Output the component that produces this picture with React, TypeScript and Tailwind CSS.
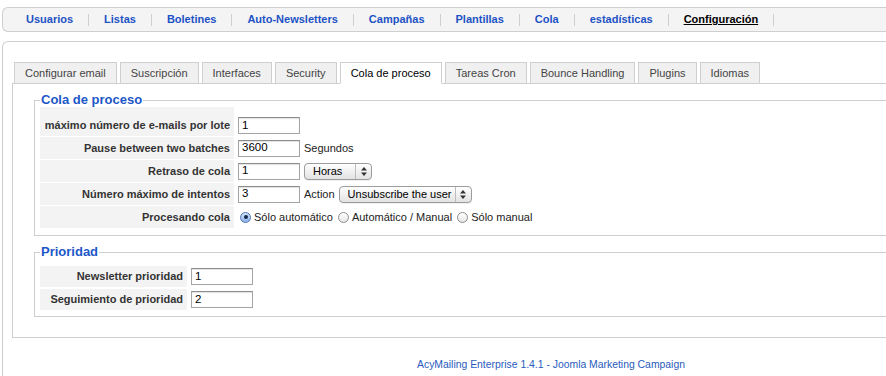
import React from "react";

const menu = [
  "Usuarios",
  "Listas",
  "Boletines",
  "Auto-Newsletters",
  "Campañas",
  "Plantillas",
  "Cola",
  "estadísticas",
  "Configuración",
];

const tabs = [
  "Configurar email",
  "Suscripción",
  "Interfaces",
  "Security",
  "Cola de proceso",
  "Tareas Cron",
  "Bounce Handling",
  "Plugins",
  "Idiomas",
];

function Arrows() {
  return (
    <svg width="6" height="9" viewBox="0 0 6 9">
      <path d="M3 0 L6 3.5 L0 3.5 Z" fill="#333" />
      <path d="M3 9 L6 5.5 L0 5.5 Z" fill="#333" />
    </svg>
  );
}

function Select({ label, w }: { label: string; w: string }) {
  return (
    <div
      className={`h-[17px] rounded-[4px] border border-[#9c9c9c] bg-linear-to-b from-white to-[#e2e2e2] flex items-stretch text-[11px] text-black shadow-[0_1px_0_rgba(0,0,0,0.06)] ${w}`}
    >
      <span className="flex-1 flex items-center pl-[8px]">{label}</span>
      <span className="w-px bg-[#bdbdbd]" />
      <span className="w-[15px] flex items-center justify-center">
        <Arrows />
      </span>
    </div>
  );
}

function Input({ value }: { value: string }) {
  return (
    <div className="w-[62px] h-[17px] border border-[#a5a5a5] border-t-[#8c8c8c] bg-white flex items-center pl-[3px] text-[11.5px] text-black shadow-[inset_0_1px_1px_rgba(0,0,0,0.12)]">
      {value}
    </div>
  );
}

function Radio({ checked }: { checked?: boolean }) {
  return checked ? (
    <span className="w-[11px] h-[11px] rounded-full border border-[#4f76b8] bg-linear-to-b from-[#d6e5f8] to-[#8db2e6] flex items-center justify-center">
      <span className="w-[4px] h-[4px] rounded-full bg-[#132a4e]" />
    </span>
  ) : (
    <span className="w-[11px] h-[11px] rounded-full border border-[#8e8e8e] bg-linear-to-b from-white to-[#e6e6e6]" />
  );
}

function Row({
  label,
  labelW,
  h,
  extra,
  children,
}: {
  label: string;
  labelW: string;
  h: string;
  extra?: string;
  children: React.ReactNode;
}) {
  return (
    <div className={`flex ${h}`}>
      <div
        className={`${labelW} bg-[#f3f3f3] flex items-center justify-end pr-[4px] font-bold text-[11px] text-[#333] ${extra ?? ""}`}
      >
        {label}
      </div>
      <div className={`flex items-center gap-[4px] pl-[4px] text-[11px] text-[#222] ${extra ?? ""}`}>
        {children}
      </div>
    </div>
  );
}

export default function App() {
  return (
    <div className="w-[886px] h-[376px] overflow-hidden bg-white font-['Liberation_Sans',Arial,sans-serif]">
      <div className="pt-[7px] pl-[2px]">
        <nav className="w-[1000px] h-[25px] border border-r-0 border-[#cfcfcf] rounded-l-[6px] bg-[#f4f4f4] flex items-center pl-[8px]">
          {menu.map((m) => (
            <React.Fragment key={m}>
              <span
                className={`px-[15px] text-[11px] font-bold ${
                  m === "Configuración" ? "text-black underline" : "text-[#1d52c4]"
                }`}
              >
                {m}
              </span>
              <span className="w-px h-[12px] bg-[#cfcfcf]" />
            </React.Fragment>
          ))}
        </nav>
      </div>

      <div className="mt-[9px] ml-[2px] w-[1000px] h-[400px] border-l border-t border-[#cfcfcf] rounded-tl-[6px] pt-[20px] pl-[9px]">
        <div className="flex items-end gap-[3px] pl-[2px] border-b border-[#cfcfcf] h-[22px]">
          {tabs.map((t) => {
            const active = t === "Cola de proceso";
            return (
              <div
                key={t}
                className={`h-[22px] -mb-px px-[10px] flex items-center border border-[#cfcfcf] text-[11px] ${
                  active ? "bg-white border-b-white text-black" : "bg-[#f0f0f0] text-[#444]"
                }`}
              >
                {t}
              </div>
            );
          })}
        </div>

        <div className="w-[990px] border-l border-b border-[#cfcfcf] pt-[9px] pl-[21px] pb-[20px]">
          <fieldset className="border border-[#cfcfcf] px-[5px] pb-[7px] w-[900px]">
            <legend className="px-[1px] text-[13px] leading-[14px] font-bold text-[#1d57c8]">
              Cola de proceso
            </legend>
            <div className="flex flex-col gap-[1px]">
              <Row label="máximo número de e-mails por lote" labelW="w-[194px]" h="h-[29px]" extra="pt-[8px]">
                <Input value="1" />
              </Row>
              <Row label="Pause between two batches" labelW="w-[194px]" h="h-[22px]">
                <Input value="3600" />
                <span>Segundos</span>
              </Row>
              <Row label="Retraso de cola" labelW="w-[194px]" h="h-[22px]">
                <Input value="1" />
                <Select label="Horas" w="w-[68px]" />
              </Row>
              <Row label="Número máximo de intentos" labelW="w-[194px]" h="h-[22px]">
                <Input value="3" />
                <span>Action</span>
                <Select label="Unsubscribe the user" w="w-[133px]" />
              </Row>
              <Row label="Procesando cola" labelW="w-[194px]" h="h-[22px]">
                <span className="ml-[2px] flex items-center gap-[3px]">
                  <Radio checked />
                  <span>Sólo automático</span>
                </span>
                <span className="ml-[1px] flex items-center gap-[3px]">
                  <Radio />
                  <span>Automático / Manual</span>
                </span>
                <span className="ml-[1px] flex items-center gap-[3px]">
                  <Radio />
                  <span>Sólo manual</span>
                </span>
              </Row>
            </div>
          </fieldset>

          <fieldset className="mt-[9px] border border-[#cfcfcf] px-[5px] pt-[7px] pb-[6px] w-[900px]">
            <legend className="px-[1px] text-[13px] leading-[14px] font-bold text-[#1d57c8]">
              Prioridad
            </legend>
            <div className="flex flex-col gap-[2px]">
              <Row label="Newsletter prioridad" labelW="w-[147px]" h="h-[21px]">
                <Input value="1" />
              </Row>
              <Row label="Seguimiento de prioridad" labelW="w-[147px]" h="h-[21px]">
                <Input value="2" />
              </Row>
            </div>
          </fieldset>
        </div>

        <div className="w-[1078px] text-center pt-[21px] text-[10.4px] leading-[12px] text-[#2a5bbd]">
          AcyMailing Enterprise 1.4.1 - Joomla Marketing Campaign
        </div>
      </div>
    </div>
  );
}
